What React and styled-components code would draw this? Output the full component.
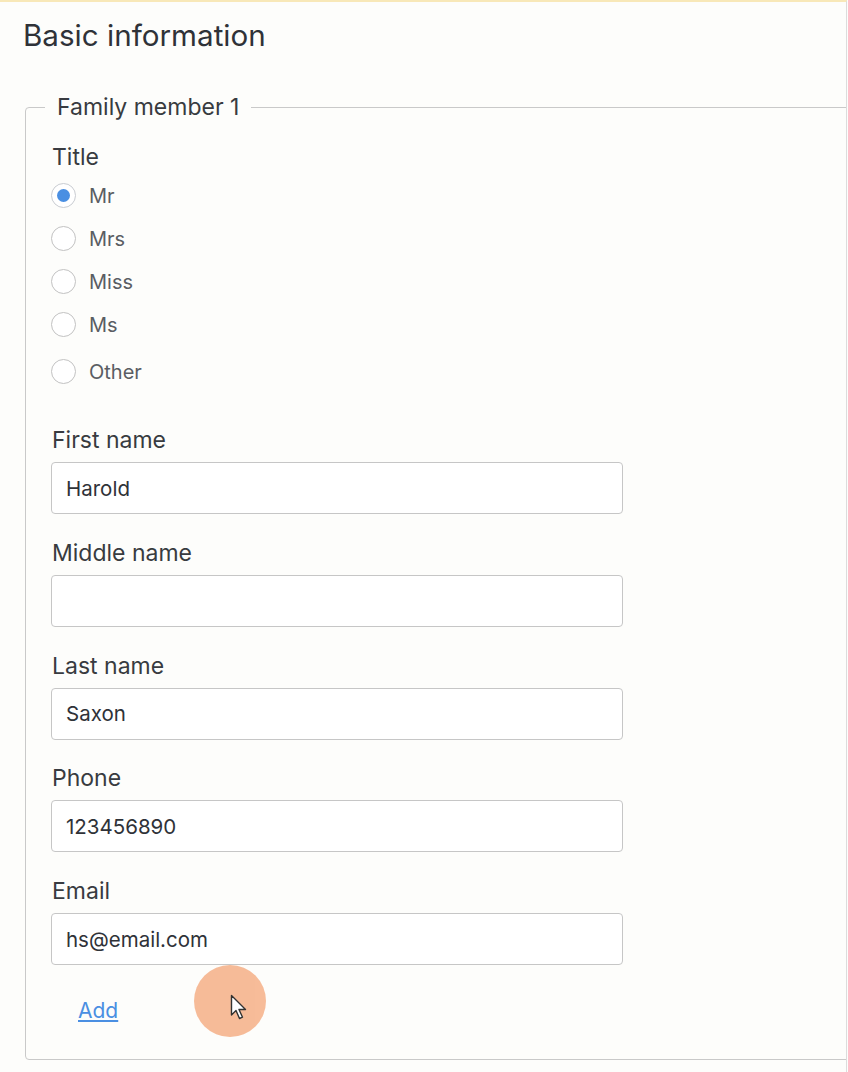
import styled, { createGlobalStyle } from "styled-components";

const GlobalStyle = createGlobalStyle`
  html, body {
    margin: 0;
    padding: 0;
    background: #fdfdfb;
  }
  body {
    font-family: Inter, "Noto Sans", "Liberation Sans", sans-serif;
    color: #333;
  }
`;

const Page = styled.div`
  position: relative;
  width: 847px;
  height: 1072px;
  border-top: 2px solid #f8e8b8;
  border-right: 1px solid #dcdcdc;
  box-sizing: border-box;
  overflow: hidden;
  background: #fdfdfb;
`;

const Heading = styled.h1`
  margin: 0;
  padding: 15px 0 0 23px;
  font-size: 29.6px;
  font-weight: 400;
  line-height: 36px;
  color: #2f3238;
`;

const Fieldset = styled.fieldset`
  margin: 40px 0 0 25px;
  padding: 0;
  width: 900px;
  min-width: 0;
  border: 1px solid #c9c9c9;
  border-radius: 4px;
  box-sizing: border-box;
`;

const Legend = styled.legend`
  margin-left: 19px;
  padding: 0 12px;
  font-size: 23px;
  line-height: 28px;
  color: #383b40;
`;

const Inner = styled.div`
  padding: 22px 0 36px 26px;
`;

const GroupLabel = styled.div`
  font-size: 23px;
  line-height: 28px;
  color: #383b40;
`;

const RadioList = styled.div`
  display: flex;
  flex-direction: column;
  margin-top: 3px;
`;

const RadioRow = styled.label`
  display: flex;
  align-items: center;
  gap: 13px;
  height: 43px;
  margin-top: ${(p) => (p.$extra ? "4px" : "0")};
  font-size: 20px;
  color: #5a5d63;
`;

const Circle = styled.span`
  position: relative;
  margin-left: -1px;
  width: 25px;
  height: 25px;
  border-radius: 50%;
  border: 1.5px solid ${(p) => (p.$checked ? "#c9ccd1" : "#c2c2c2")};
  box-sizing: border-box;
  background: #fff;
  &::after {
    content: "";
    display: ${(p) => (p.$checked ? "block" : "none")};
    position: absolute;
    left: 50%;
    top: 50%;
    width: 13px;
    height: 13px;
    margin: -6.5px 0 0 -6.5px;
    border-radius: 50%;
    background: #4a8fe2;
  }
`;

const Fields = styled.div`
  display: flex;
  flex-direction: column;
  gap: 24.75px;
  margin-top: 33px;
`;

const Field = styled.div`
  display: flex;
  flex-direction: column;
  gap: 8px;
`;

const Input = styled.div`
  width: 572px;
  height: 52px;
  margin-left: -1px;
  box-sizing: border-box;
  border: 1px solid #c6c6c6;
  border-radius: 4px;
  background: #fff;
  padding: 0 14px;
  display: flex;
  align-items: center;
  font-size: 20.5px;
  color: #2f3238;
`;

const AddLink = styled.a`
  display: inline-block;
  margin: 33px 0 0 26px;
  font-size: 21px;
  line-height: 25px;
  color: #4a8fe2;
  text-decoration: underline;
  cursor: pointer;
`;

const Pointer = styled.div`
  position: absolute;
  left: 194px;
  top: 963px;
  width: 72px;
  height: 72px;
  border-radius: 50%;
  background: #f6b690;
  opacity: 0.92;
`;

const Arrow = styled.svg`
  position: absolute;
  left: 36px;
  top: 29px;
`;

const titles = ["Mr", "Mrs", "Miss", "Ms", "Other"];

const fields = [
  ["First name", "Harold"],
  ["Middle name", ""],
  ["Last name", "Saxon"],
  ["Phone", "123456890"],
  ["Email", "hs@email.com"],
];

export default function App() {
  return (
    <Page>
      <GlobalStyle />
      <Heading>Basic information</Heading>
      <Fieldset>
        <Legend>Family member 1</Legend>
        <Inner>
          <GroupLabel>Title</GroupLabel>
          <RadioList>
            {titles.map((t, i) => (
              <RadioRow key={t} $extra={t === "Other"}>
                <Circle $checked={i === 0} />
                {t}
              </RadioRow>
            ))}
          </RadioList>
          <Fields>
            {fields.map(([label, value]) => (
              <Field key={label}>
                <GroupLabel>{label}</GroupLabel>
                <Input>{value}</Input>
              </Field>
            ))}
          </Fields>
          <AddLink>Add</AddLink>
        </Inner>
      </Fieldset>
      <Pointer>
        <Arrow width="20" height="28" viewBox="0 0 20 28">
          <path
            d="M1.5 1.5 L1.5 21 L6 16.5 L9.5 24.5 L12.5 23.2 L9 15.5 L15.5 15.5 Z"
            fill="#fff"
            stroke="#222"
            strokeWidth="1.4"
            strokeLinejoin="round"
          />
        </Arrow>
      </Pointer>
    </Page>
  );
}
